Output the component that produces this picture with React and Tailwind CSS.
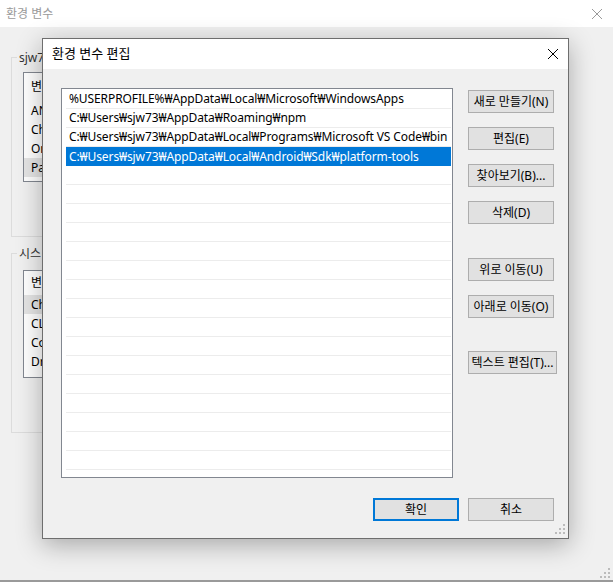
const paths = [
  "%USERPROFILE%₩AppData₩Local₩Microsoft₩WindowsApps",
  "C:₩Users₩sjw73₩AppData₩Roaming₩npm",
  "C:₩Users₩sjw73₩AppData₩Local₩Programs₩Microsoft VS Code₩bin",
  "C:₩Users₩sjw73₩AppData₩Local₩Android₩Sdk₩platform-tools",
];

function CloseIcon({ className }) {
  return (
    <svg width="12" height="12" viewBox="0 0 12 12" className={className}>
      <path d="M1 1L11 11M11 1L1 11" stroke="currentColor" strokeWidth="1" />
    </svg>
  );
}

function Grip({ className }) {
  const dots = [
    [8, 0], [8, 4], [4, 4], [8, 8], [4, 8], [0, 8],
  ];
  return (
    <svg width="10" height="10" viewBox="0 0 10 10" className={className}>
      {dots.map(([x, y]) => (
        <rect key={`${x}-${y}`} x={x} y={y} width="2" height="2" fill="#bcbcbc" />
      ))}
    </svg>
  );
}

function Btn({ children, w = "w-[86px]", primary }) {
  return (
    <button
      className={`${w} h-[23px] bg-[#e1e1e1] text-[12px] leading-none text-black flex items-center justify-center ${
        primary ? "border-2 border-[#0078d7]" : "border border-[#adadad]"
      }`}
    >
      {children}
    </button>
  );
}

function BgList({ rows, highlight, headerH, className }) {
  return (
    <div className={`border border-[#828790] bg-white ${className}`}>
      <div className={`${headerH} pl-[7px] flex items-center`}>변</div>
      <div className="flex flex-col">
        {rows.map((r, i) => (
          <div
            key={r}
            className={`h-[19px] pl-[7px] flex items-center ${i === highlight ? "bg-[#e5e5e5]" : ""}`}
          >
            {r}
          </div>
        ))}
      </div>
    </div>
  );
}

export default function App() {
  const blanks = Array.from({ length: 16 });
  return (
    <div
      className="relative w-[613px] h-[582px] overflow-hidden bg-[#f0f0f0] text-[12px] text-black"
      style={{ fontFamily: '"Noto Sans", "Noto Sans CJK KR", sans-serif' }}
    >
      {/* background window */}
      <div className="h-[27px] bg-white flex items-center justify-between pl-[6px] pr-[10px] text-[#9a9a9a]">
        <span>환경 변수</span>
        <CloseIcon className="text-[#9a9a9a]" />
      </div>

      <div className="pl-[11px] pt-[30px] flex flex-col gap-[16px]">
        <div className="relative border border-[#dcdcdc] h-[180px] w-[520px] pt-[14px] pl-[11px]">
          <span className="absolute -top-[9px] left-[5px] px-[2px] bg-[#f0f0f0] text-[#333]">sjw7</span>
          <BgList rows={["AN", "Ch", "On", "Pa"]} highlight={3} headerH="h-[28px]" className="h-[110px] w-[480px]" />
        </div>
        <div className="relative border border-[#dcdcdc] h-[180px] w-[520px] pt-[16px] pl-[11px]">
          <span className="absolute -top-[9px] left-[5px] px-[2px] bg-[#f0f0f0] text-[#333]">시스</span>
          <BgList rows={["Ch", "CL", "Co", "Dr"]} highlight={0} headerH="h-[24px]" className="h-[108px] w-[480px]" />
        </div>
      </div>

      <Grip className="absolute right-[3px] bottom-[4px]" />
      <div className="absolute left-0 right-0 bottom-0 h-[2px] bg-[#9a9a9a]" />

      {/* dialog */}
      <div className="absolute left-[42px] top-[38px] w-[527px] h-[501px] border border-[#6e6e6e] bg-[#f0f0f0] shadow-[0_6px_24px_rgba(0,0,0,0.3)] flex flex-col">
        <div className="h-[30px] bg-white flex items-center justify-between pl-[9px] pr-[9px]">
          <span className="text-[13px]">환경 변수 편집</span>
          <CloseIcon className="text-black" />
        </div>

        <div className="flex pl-[18px] pt-[19px] gap-[15px]">
          <div className="w-[392px] h-[390px] border border-[#828790] bg-white pl-[4px] pr-[1px] pt-[1px] overflow-hidden">
            {paths.map((p, i) => (
              <div
                key={p}
                className={`h-[19px] pl-[3px] flex items-center whitespace-nowrap tracking-[-0.1px] ${
                  i === 3 ? "bg-[#0078d7] text-white" : "border-b border-[#ececec]"
                }`}
              >
                {p}
              </div>
            ))}
            {blanks.map((_, i) => (
              <div key={i} className="h-[19px] border-b border-[#ececec]" />
            ))}
          </div>

          <div className="flex flex-col pt-[2px]">
            <div className="flex flex-col gap-[14px]">
              <Btn>새로 만들기(N)</Btn>
              <Btn>편집(E)</Btn>
              <Btn>찾아보기(B)...</Btn>
              <Btn>삭제(D)</Btn>
            </div>
            <div className="flex flex-col gap-[14px] mt-[34px]">
              <Btn>위로 이동(U)</Btn>
              <Btn>아래로 이동(O)</Btn>
            </div>
            <div className="mt-[33px]">
              <Btn w="w-[89px]">텍스트 편집(T)...</Btn>
            </div>
          </div>
        </div>

        <div className="flex justify-end gap-[9px] pr-[14px] mt-[20px]">
          <Btn primary>확인</Btn>
          <Btn>취소</Btn>
        </div>
        <Grip className="absolute right-[3px] bottom-[4px]" />
      </div>
    </div>
  );
}
